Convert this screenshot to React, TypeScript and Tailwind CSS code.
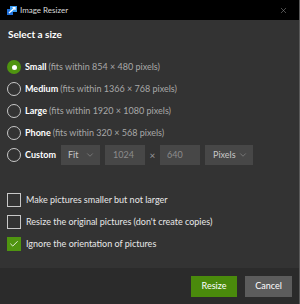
import { ChevronDown, Check, X } from 'lucide-react'

const sizes = [
  { name: 'Small', desc: '(fits within 854 × 480 pixels)', checked: true },
  { name: 'Medium', desc: '(fits within 1366 × 768 pixels)' },
  { name: 'Large', desc: '(fits within 1920 × 1080 pixels)' },
  { name: 'Phone', desc: '(fits within 320 × 568 pixels)' },
]

const options = [
  { label: 'Make pictures smaller but not larger' },
  { label: "Resize the original pictures (don't create copies)" },
  { label: 'Ignore the orientation of pictures', checked: true },
]

function Radio({ checked }: { checked?: boolean }) {
  if (checked) {
    return (
      <span className="w-[14px] h-[14px] rounded-full bg-[#4f9410] flex items-center justify-center shrink-0">
        <span className="w-[5px] h-[5px] rounded-full bg-white"></span>
      </span>
    )
  }
  return <span className="w-[14px] h-[14px] rounded-full border border-[#c8c8c8] shrink-0"></span>
}

function Box({ checked }: { checked?: boolean }) {
  if (checked) {
    return (
      <span className="w-[14px] h-[14px] bg-[#4f9410] flex items-center justify-center shrink-0">
        <Check className="w-[10px] h-[10px] text-white" strokeWidth={2} />
      </span>
    )
  }
  return <span className="w-[14px] h-[14px] border border-[#c8c8c8] shrink-0"></span>
}

function AppIcon() {
  return (
    <svg width="10" height="9" viewBox="0 0 10 9" className="shrink-0">
      <rect x="0" y="3" width="6" height="6" fill="#1e6fd9" />
      <rect x="3" y="0" width="7" height="6" fill="#3a9bf0" />
      <path d="M2 7 L8 1.5" stroke="#fff" strokeWidth="1.3" />
      <path d="M5.5 1.5 H8 V4" stroke="#fff" strokeWidth="1.1" fill="none" />
    </svg>
  )
}

export default function App() {
  return (
    <div
      className="w-[300px] h-[304px] flex flex-col bg-[#333333] border-r border-[#5a5a5a] overflow-hidden"
      style={{ fontFamily: 'Lato, "Open Sans", sans-serif' }}
    >
      {/* Title bar */}
      <div className="h-[20px] bg-black flex items-center pl-[7px] pr-[11px] shrink-0">
        <AppIcon />
        <span className="ml-[3px] text-[8px] text-[#dcdcdc]">Image Resizer</span>
        <X className="ml-auto w-[9px] h-[9px] text-[#8a8a8a]" strokeWidth={1.5} />
      </div>

      {/* Body */}
      <div className="flex-1 flex flex-col px-[7px]">
        <h1 className="mt-[6px] ml-[1px] text-[10px] font-bold text-white leading-[16px]">Select a size</h1>

        <div className="mt-[18px] flex flex-col gap-[8px]">
          {sizes.map((s) => (
            <div key={s.name} className="flex items-center h-[14px] text-[9px]">
              <Radio checked={s.checked} />
              <span className="ml-[4px] font-bold text-white">{s.name}</span>
              <span className="ml-[2px] text-[#a8a8a8]">{s.desc}</span>
            </div>
          ))}
          <div className="flex items-center h-[14px] text-[9px]">
            <Radio />
            <span className="ml-[4px] font-bold text-white w-[36px]">Custom</span>
            <div className="w-[39px] h-[20px] bg-[#474747] flex items-center justify-between pl-[7px] pr-[5px] text-[#c8c8c8]">
              Fit
              <ChevronDown className="w-[10px] h-[10px] text-[#9a9a9a]" strokeWidth={1.3} />
            </div>
            <div className="ml-[5px] w-[40px] h-[20px] bg-[#474747] flex items-center px-[8px] text-[#8c8c8c]">
              1024
            </div>
            <span className="w-[15px] text-center text-[#9a9a9a] text-[10px]">×</span>
            <div className="w-[40px] h-[20px] bg-[#474747] flex items-center px-[7px] text-[#8c8c8c]">
              640
            </div>
            <div className="ml-[5px] w-[48px] h-[20px] bg-[#474747] flex items-center justify-between pl-[8px] pr-[5px] text-[#c8c8c8]">
              Pixels
              <ChevronDown className="w-[10px] h-[10px] text-[#9a9a9a]" strokeWidth={1.3} />
            </div>
          </div>
        </div>

        <div className="mt-[31px] flex flex-col gap-[8px]">
          {options.map((o) => (
            <div key={o.label} className="flex items-center h-[14px] text-[9px] text-[#e8e8e8]">
              <Box checked={o.checked} />
              <span className="ml-[5px]">{o.label}</span>
            </div>
          ))}
        </div>
      </div>

      {/* Footer */}
      <div className="h-[36px] bg-[#2b2b2b] flex items-center justify-end gap-[8px] pr-[7px] shrink-0">
        <button className="w-[46px] h-[21px] bg-[#4a8a0c] text-white text-[9px]">Resize</button>
        <button className="w-[47px] h-[21px] bg-[#5c5c5c] text-white text-[9px]">Cancel</button>
      </div>
    </div>
  )
}
